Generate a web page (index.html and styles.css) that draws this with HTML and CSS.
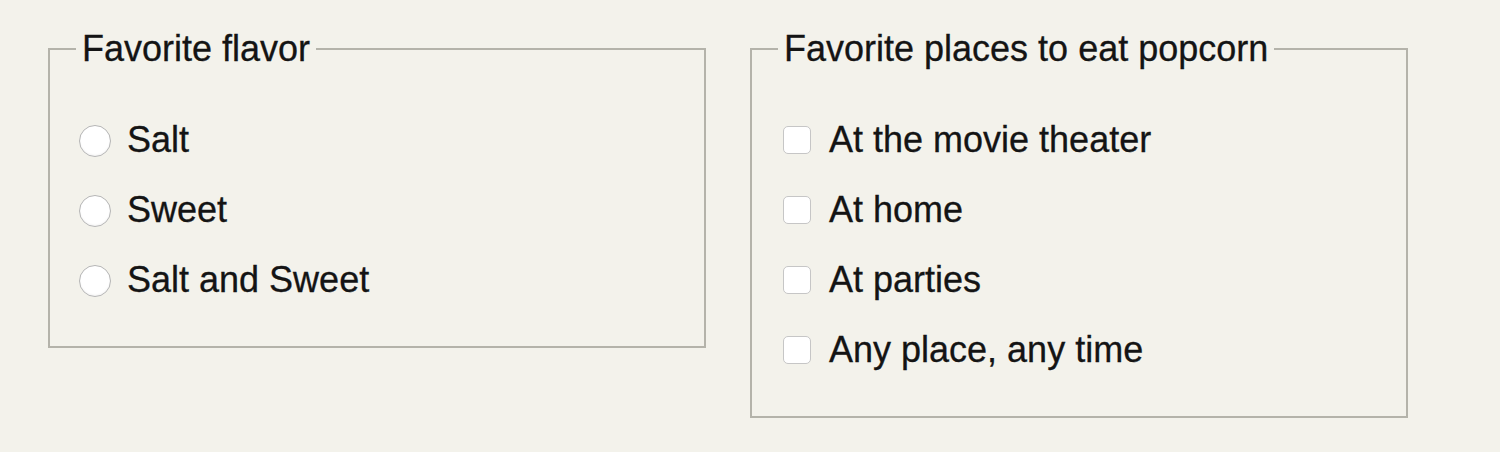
FILE: index.html
```html
<!DOCTYPE html>
<html lang="en">
<head>
    <meta charset="UTF-8">
    <meta name="viewport" content="width=device-width, initial-scale=1.0">
    <title>Popcorn Survey</title>
    <link rel="stylesheet" href="styles.css">
</head>
<body>
    <form class="survey">
        <!-- Flavor -->
        <fieldset class="group">
            <legend>Favorite flavor</legend>
            <label class="choice"><input type="radio" name="flavor" value="salt"> Salt</label>
            <label class="choice"><input type="radio" name="flavor" value="sweet"> Sweet</label>
            <label class="choice"><input type="radio" name="flavor" value="both"> Salt and Sweet</label>
        </fieldset>

        <!-- Places -->
        <fieldset class="group">
            <legend>Favorite places to eat popcorn</legend>
            <label class="choice"><input type="checkbox" name="place" value="theater"> At the movie theater</label>
            <label class="choice"><input type="checkbox" name="place" value="home"> At home</label>
            <label class="choice"><input type="checkbox" name="place" value="parties"> At parties</label>
            <label class="choice"><input type="checkbox" name="place" value="any"> Any place, any time</label>
        </fieldset>
    </form>
</body>
</html>
```

FILE: styles.css
```css
body {
    margin: 0;
    padding: 0;
    background-color: #f3f2eb;
    color: #141414;
    font-family: "Liberation Sans", Arial, sans-serif;
    font-size: 36px;
}

.survey {
    display: flex;
    align-items: flex-start;
    gap: 44px;
    padding: 29px 0 0 48px;
}

.group {
    box-sizing: border-box;
    width: 658px;
    margin: 0;
    padding: 36px 26px 31px 26px;
    border: 2px solid #b4b3aa;
}

.group legend {
    padding: 0 6px;
    line-height: 40px;
    -webkit-text-stroke: 0.3px #141414;
}

.choice {
    display: flex;
    align-items: center;
    height: 70px;
    line-height: 70px;
    -webkit-text-stroke: 0.3px #141414;
}

.choice input {
    appearance: none;
    -webkit-appearance: none;
    flex: none;
    background: #ffffff;
    cursor: pointer;
}

.choice input[type="radio"] {
    width: 32px;
    height: 32px;
    margin: 1px 16px 0 3px;
    border: 1.5px solid #b5b5b5;
    border-radius: 50%;
    box-shadow: inset 0 -1px 2px rgba(0, 0, 0, 0.05);
}

.choice input[type="checkbox"] {
    width: 28px;
    height: 28px;
    margin: -1px 18px 0 5px;
    border: 1.5px solid #c6c6c6;
    border-radius: 5px;
}

.choice input:checked {
    background: #3b8ff0;
    border-color: #2f7bd6;
}
```
